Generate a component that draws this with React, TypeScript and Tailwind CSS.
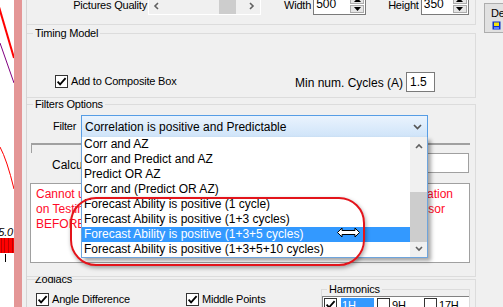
import React from 'react'

const items = [
  'Corr and AZ',
  'Corr and Predict and AZ',
  'Predict OR AZ',
  'Corr and (Predict OR AZ)',
  'Forecast Ability is positive (1 cycle)',
  'Forecast Ability is positive (1+3 cycles)',
  'Forecast Ability is positive (1+3+5 cycles)',
  'Forecast Ability is positive (1+3+5+10 cycles)',
]

function CheckBox({ checked = false }: { checked?: boolean }) {
  return (
    <span className="w-[13px] h-[13px] shrink-0 border border-[#333333] bg-white flex items-center justify-center">
      {checked && (
        <svg width="11" height="11" viewBox="0 0 11 11">
          <path d="M1.6 5.6 L4.1 8.3 L9.6 2.2" fill="none" stroke="#000" strokeWidth="1.8" />
        </svg>
      )}
    </span>
  )
}

function Chevron({ dir, color = '#606060' }: { dir: 'up' | 'down' | 'left' | 'right'; color?: string }) {
  const d = {
    up: 'M1 5 L4 2 L7 5',
    down: 'M1 2 L4 5 L7 2',
    left: 'M5 1 L2 4 L5 7',
    right: 'M2 1 L5 4 L2 7',
  }[dir]
  return (
    <svg width="8" height="8" viewBox="0 0 8 8">
      <path d={d} fill="none" stroke={color} strokeWidth="1.6" />
    </svg>
  )
}

function SpinInput({ value, width }: { value: string; width: string }) {
  return (
    <div className={`${width} h-[21px] border border-[#7a7a7a] bg-white flex`}>
      <span className="flex-1 pl-[2px] leading-[19px] text-[12px] tracking-normal">{value}</span>
      <div className="w-[16px] flex flex-col gap-[1px] p-[1px]">
        <div className="flex-1 bg-[#e5e5e5] border border-[#acacac] flex items-center justify-center">
          <svg width="7" height="4" viewBox="0 0 7 4"><path d="M0 4 L3.5 0 L7 4 Z" fill="#000" /></svg>
        </div>
        <div className="flex-1 bg-[#e5e5e5] border border-[#acacac] flex items-center justify-center">
          <svg width="7" height="4" viewBox="0 0 7 4"><path d="M0 0 L3.5 4 L7 0 Z" fill="#000" /></svg>
        </div>
      </div>
    </div>
  )
}

function ChartStrip() {
  return (
    <div className="relative w-[14px] h-[307px] shrink-0 bg-white">
      <svg width="14" height="307" viewBox="0 0 14 307" className="block">
        <line x1="-1" y1="7" x2="14" y2="58" stroke="#ff0000" strokeWidth="2" />
        <line x1="0" y1="43" x2="14" y2="83" stroke="#800080" strokeWidth="1" />
        <path d="M0 147 Q7 160 14 189" fill="none" stroke="#ff0000" strokeWidth="1" />
        <rect x="0" y="238" width="14" height="15" fill="#ff0000" />
        <line x1="1.5" y1="238" x2="1.5" y2="253" stroke="#c00000" />
        <line x1="4.5" y1="238" x2="4.5" y2="253" stroke="#c00000" />
        <line x1="8.5" y1="238" x2="8.5" y2="253" stroke="#c00000" />
        <line x1="12.5" y1="238" x2="12.5" y2="253" stroke="#c00000" />
        <line x1="5.5" y1="254" x2="5.5" y2="262" stroke="#000" />
      </svg>
      <span className="absolute right-[1px] top-[226px] text-[11px] leading-[12px] italic">5.0</span>
    </div>
  )
}

export default function App() {
  return (
    <div className="relative w-[503px] h-[307px] overflow-hidden flex items-start bg-[#f0f0f0] text-black text-[11px] tracking-[-0.2px] font-['Liberation_Sans',Arial,sans-serif]">
      <ChartStrip />
      <div className="w-[8px] h-[307px] shrink-0 bg-[#e49696]" />
      <div className="w-[4px] shrink-0" />

      <main className="w-[450px] h-[307px] shrink-0 border-l border-[#d5d5d5] flex flex-col">
        {/* picture size row */}
        <div className="h-[25px] shrink-0 border-b border-r border-[#dcdcdc] flex items-end pb-[9px]">
          <span className="w-[121px] text-right pr-[1px] pb-[3px] leading-[13px] whitespace-nowrap">Pictures Quality</span>
          <div className="w-[113px] h-[21px] bg-[#f0f0f0] border border-white flex items-end">
            <div className="w-[17px] h-[13px] flex items-start justify-center pt-[1px]"><Chevron dir="left" /></div>
            <div className="w-[54px]" />
            <div className="w-[17px] h-[14px] bg-[#cdcdcd]" />
            <div className="w-[7px]" />
            <div className="w-[17px] h-[13px] flex items-start justify-center pt-[1px]"><Chevron dir="right" /></div>
          </div>
          <span className="ml-[23px] pb-[3px] leading-[13px]">Width</span>
          <div className="ml-[2px]"><SpinInput value="500" width="w-[53px]" /></div>
          <span className="ml-[22px] pb-[3px] leading-[13px]">Height</span>
          <div className="ml-[2px]"><SpinInput value="350" width="w-[48px]" /></div>
        </div>

        {/* Timing Model */}
        <div className="mt-[8px] h-[65px] shrink-0 border border-l-0 border-[#dcdcdc]">
          <span className="block w-fit -mt-[7px] ml-[6px] px-[2px] bg-[#f0f0f0] leading-[13px]">Timing Model</span>
          <div className="mt-[32px] flex items-start pl-[28px] pr-[40px]">
            <div className="mt-[2px] flex items-center gap-[3px]">
              <CheckBox checked />
              <span className="leading-[13px] mt-[1px]">Add to Composite Box</span>
            </div>
            <span className="ml-auto mt-[4px] text-[12px] tracking-normal leading-[14px]">Min num. Cycles (A)</span>
            <div className="ml-[3px] w-[29px] h-[20px] border border-[#7a7a7a] bg-white pl-[3px] text-[12px] tracking-normal leading-[18px]">1.5</div>
          </div>
        </div>

        {/* Filters Options */}
        <div className="relative z-10 mt-[6px] h-[173px] shrink-0 border border-l-0 border-[#dcdcdc] bg-[#f0f0f0]">
          <span className="block w-fit -mt-[7px] ml-[6px] px-[2px] bg-[#f0f0f0] leading-[13px]">Filters Options</span>
          <div className="mt-[4px] flex items-center">
            <span className="ml-[26px] w-[28px] leading-[13px]">Filter</span>
            <div className="relative w-[347px] h-[23px] border border-[#569de5] bg-gradient-to-b from-[#eaf3fd] to-[#cfe4f9] flex items-center pl-[3px] pr-[5px] text-[12px] tracking-normal">
              <span className="flex-1 leading-[14px]">Correlation is positive and Predictable</span>
              <svg width="9" height="6" viewBox="0 0 9 6"><path d="M1 1 L4.5 4.5 L8 1" fill="none" stroke="#555" strokeWidth="1.7" /></svg>

              {/* open drop-down list */}
              <div className="absolute left-[-1px] top-full w-[347px] h-[121px] border-x border-b border-[#6ea4dc] bg-white flex shadow-[3px_3px_4px_rgba(0,0,0,0.35)] z-20">
                <div className="flex-1 flex flex-col">
                  {items.map((it, i) => (
                    <div
                      key={it}
                      className={`h-[15px] leading-[15px] pl-[2px] whitespace-nowrap ${i === 6 ? 'bg-[#3399ff] text-white' : ''}`}
                    >
                      {it}
                    </div>
                  ))}
                </div>
                <div className="w-[17px] bg-[#f0f0f0] flex flex-col items-center">
                  <div className="h-[16px] pt-[6px]"><Chevron dir="up" /></div>
                  <div className="mt-[39px] w-[17px] h-[50px] bg-[#cdcdcd]" />
                  <div className="pt-[3px]"><Chevron dir="down" /></div>
                </div>
              </div>
            </div>
          </div>

          <div className="mt-[5px] ml-[4px] w-[439px] h-[10px] border-t-2 border-l border-[#a0a0a0]" />

          <div className="h-[20px] flex items-end">
            <span className="ml-[25px] pb-[1px] text-[12px] tracking-normal leading-[14px] whitespace-nowrap">Calculation Start Date</span>
            <div className="ml-auto mr-[6px] w-[46px] h-[20px] border border-[#a0a0a0] bg-white" />
          </div>

          <div className="mt-[10px] ml-[3px] w-[440px] h-[80px] border border-[#a0a0a0] bg-white pt-[3px] pl-[5px] text-[12px] leading-[15px] tracking-normal text-[#ff0a28]">
            <div className="flex justify-between pr-[16px] whitespace-nowrap">
              <span>Cannot use Forecast filters: no Cycles</span>
              <span>Calculation</span>
            </div>
            <div className="flex justify-between pr-[24px] whitespace-nowrap">
              <span>on Testing Period. Please run the Composite</span>
              <span>Processor</span>
            </div>
            <div className="whitespace-nowrap">BEFORE using these filters.</div>
          </div>
        </div>

        {/* Zodiacs */}
        <div className="mt-[2px] h-[40px] shrink-0 border-t border-r border-[#dcdcdc]">
          <span className="block w-fit -mt-[6px] ml-[6px] px-[2px] leading-[11px]">Zodiacs</span>
          <div className="flex items-start">
            <div className="ml-[9px] w-[150px] mt-[8px] flex items-center gap-[3px]">
              <CheckBox checked />
              <span className="leading-[13px]">Angle Difference</span>
            </div>
            <div className="w-[135px] mt-[8px] flex items-center gap-[3px]">
              <CheckBox checked />
              <span className="leading-[13px]">Middle Points</span>
            </div>
            <div className="mt-[4px] w-[149px] h-[30px] border border-[#dcdcdc]">
              <span className="block w-fit -mt-[6px] ml-[5px] px-[2px] bg-[#f0f0f0] leading-[11px]">Harmonics</span>
              <div className="mt-[1px] h-[20px] border-t border-l border-[#828282] bg-white pt-[1px] pl-[1px] flex items-start">
                <CheckBox checked />
                <span className="ml-[4px] w-[33px] h-[14px] bg-[#3399ff] text-white pl-[1px] leading-[14px]">1H</span>
                <span className="ml-[3px]"><CheckBox /></span>
                <span className="ml-[2px] w-[32px] leading-[14px]">9H</span>
                <CheckBox />
                <span className="ml-[2px] leading-[14px]">17H</span>
              </div>
            </div>
          </div>
        </div>
      </main>

      <div className="flex-1 pl-[8px] pt-[3px]">
        <div className="w-[40px] h-[30px] shrink-0 border border-[#adadad] bg-[#e1e1e1] pl-[6px] pt-[4px] flex flex-col">
          <span className="leading-[11px] whitespace-nowrap">De</span>
          <svg width="10" height="10" viewBox="0 0 10 10" className="ml-[1px] mt-[2px]">
            <rect x="0.5" y="0.5" width="8" height="8" fill="#1030c8" />
            <rect x="2" y="1.5" width="5" height="3.5" fill="#f5e50a" />
            <rect x="2" y="6" width="5" height="2" fill="#6080ff" />
          </svg>
        </div>
      </div>

      {/* annotation drawn over the screenshot */}
      <div className="absolute left-[70px] top-[197px] w-[295px] h-[69px] rounded-[26px] border-2 border-[#e3141b] shadow-[1px_2px_4px_rgba(0,0,0,0.35)] z-30 pointer-events-none" />

      {/* resize cursor */}
      <svg width="23" height="11" viewBox="0 0 23 11" className="absolute left-[337px] top-[227px] z-40">
        <path d="M0.5 5.5 L5 1 L5 3.5 L18 3.5 L18 1 L22.5 5.5 L18 10 L18 7.5 L5 7.5 L5 10 Z" fill="#fff" stroke="#000" strokeWidth="1" />
      </svg>
    </div>
  )
}
